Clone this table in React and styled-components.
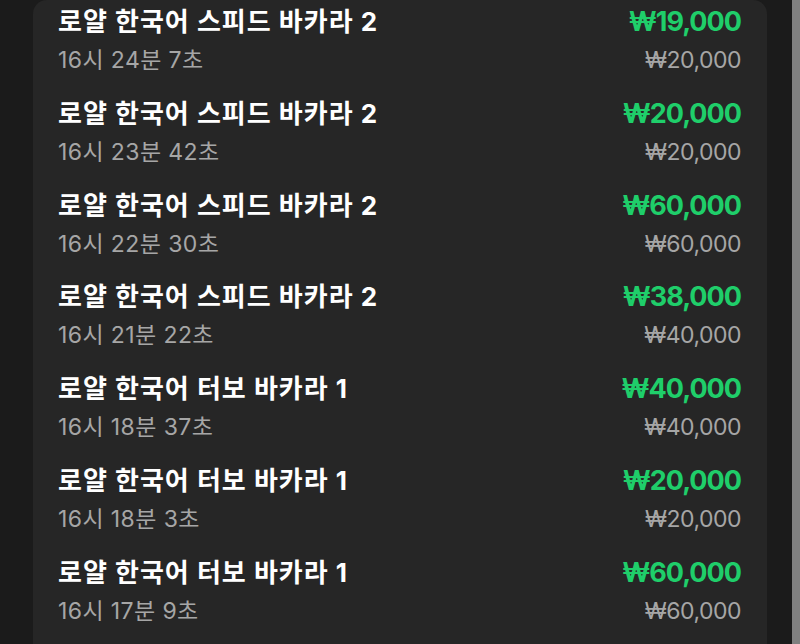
import styled, { createGlobalStyle } from "styled-components";

const bets = [
  { game: "로얄 한국어 스피드 바카라 2", time: "16시 24분 7초", win: "₩19,000", stake: "₩20,000" },
  { game: "로얄 한국어 스피드 바카라 2", time: "16시 23분 42초", win: "₩20,000", stake: "₩20,000" },
  { game: "로얄 한국어 스피드 바카라 2", time: "16시 22분 30초", win: "₩60,000", stake: "₩60,000" },
  { game: "로얄 한국어 스피드 바카라 2", time: "16시 21분 22초", win: "₩38,000", stake: "₩40,000" },
  { game: "로얄 한국어 터보 바카라 1", time: "16시 18분 37초", win: "₩40,000", stake: "₩40,000" },
  { game: "로얄 한국어 터보 바카라 1", time: "16시 18분 3초", win: "₩20,000", stake: "₩20,000" },
  { game: "로얄 한국어 터보 바카라 1", time: "16시 17분 9초", win: "₩60,000", stake: "₩60,000" },
];

export default function App() {
  return (
    <>
      <GlobalStyle />
      <Page>
        <Main>
          <Card>
            {bets.map((b, i) => (
              <Row key={i}>
                <Left>
                  <Title>{b.game}</Title>
                  <Time>{b.time}</Time>
                </Left>
                <Right>
                  <Win>{b.win}</Win>
                  <Stake>{b.stake}</Stake>
                </Right>
              </Row>
            ))}
          </Card>
        </Main>
        <Scrollbar />
      </Page>
    </>
  );
}

const GlobalStyle = createGlobalStyle`
  html, body {
    margin: 0;
    padding: 0;
    background: #1b1b1b;
    overflow: hidden;
  }
  body {
    font-family: "Inter", "Noto Sans CJK KR", sans-serif;
  }
`;

const Page = styled.div`
  display: flex;
  height: 644px;
  overflow: hidden;
`;

const Main = styled.main`
  flex: 1;
  padding: 0 25px 0 33px;
`;

const Scrollbar = styled.div`
  width: 8px;
  background: #808080;
`;

const Card = styled.section`
  background: #262626;
  border-radius: 14px 14px 0 0;
  min-height: 644px;
  padding: 0 26px 0 25px;
`;

const Row = styled.div`
  display: flex;
  justify-content: space-between;
  height: 91.8px;
  padding-top: 6px;
  box-sizing: border-box;
`;

const Left = styled.div`
  display: flex;
  flex-direction: column;
`;

const Right = styled.div`
  display: flex;
  flex-direction: column;
  align-items: flex-end;
`;

const Title = styled.p`
  margin: 0 0 8px;
  font-size: 26px;
  line-height: 32px;
  font-weight: 700;
  color: #ffffff;
  letter-spacing: 1px;
`;

const Win = styled.p`
  margin: 0 0 8px;
  font-size: 27px;
  line-height: 32px;
  font-weight: 700;
  color: #1fce6a;
  letter-spacing: -1px;
`;

const Time = styled.p`
  margin: 0;
  font-size: 23px;
  line-height: 28px;
  color: #a6a6a6;
  letter-spacing: 0.4px;
`;

const Stake = styled(Time)`
  letter-spacing: -0.5px;
`;
